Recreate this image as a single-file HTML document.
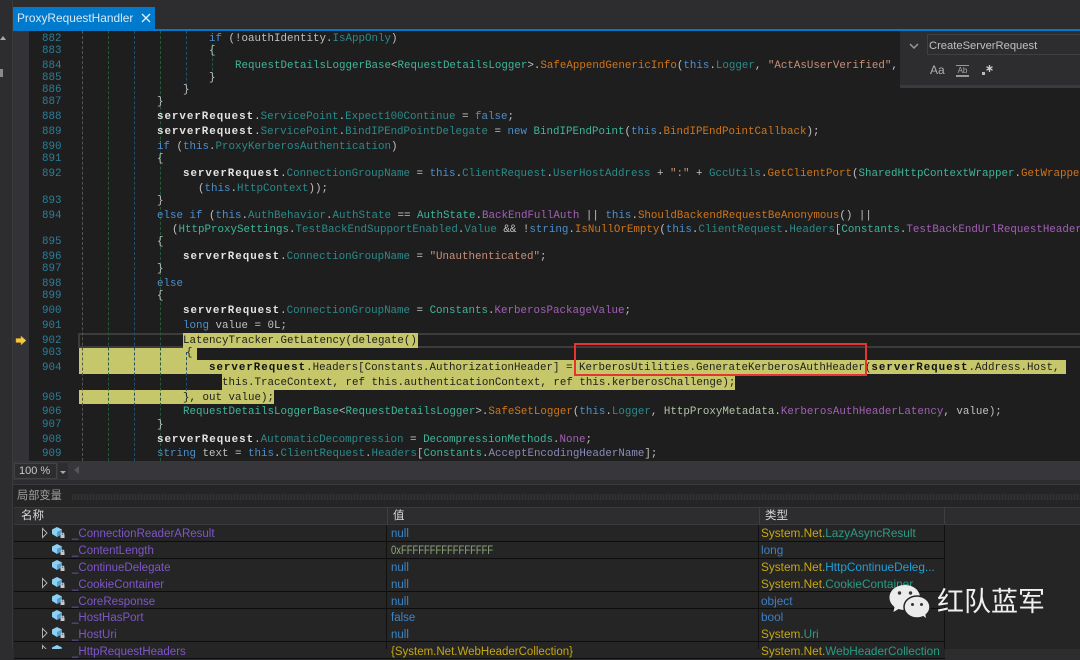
<!DOCTYPE html>
<html><head><meta charset="utf-8"><style>
html,body{margin:0;padding:0;background:#2d2d30}
body{width:1080px;height:649px;position:relative;overflow:hidden;font-family:"Liberation Sans","Noto Sans CJK SC",sans-serif;filter:blur(.3px)}
.a{position:absolute}
.l{position:absolute;margin-top:1px;font:10.83px/14px "Liberation Mono","Noto Sans CJK SC",monospace;white-space:pre;color:#c0c0c0}
.n{position:absolute;margin-top:1px;left:42px;font:10.83px/14px "Liberation Mono",monospace;color:#2b7f9b}
.k{color:#4b8fce}.t{color:#3fb59a}.p{color:#2c8a8a}.m{color:#d0751a}.v{color:#e4e4e4;font-weight:bold;letter-spacing:.97px}.s{color:#c89078}.c{color:#a45fb8}.h{color:#b0c4a8}.u{color:#8a8ab8}
.hl .k,.hl .t,.hl .p,.hl .m,.hl .c{color:#1e1e1e}.hl{color:#1e1e1e}.hl .v{color:#111}
.g{position:absolute;top:31px;height:430px;width:0;border-left:1px dashed}
.r{position:absolute;left:14px;width:931px;height:16px;background:#252526;border-bottom:1px solid #0d0d0d}
.x{position:absolute;font-size:11.5px;line-height:16px;white-space:pre}
.nm{left:72px;color:#7f55c8;margin-top:1px}.vl{left:391px;color:#3a86c8;margin-top:1px}.ty{left:761px;font-size:11.8px}
.y{color:#c8a80c}.q{color:#2a9d85}.b{color:#3f7fc4}.w{color:#1f9fd8}
.sep{position:absolute;width:1px;background:#111;top:525px;height:124px}
</style></head><body>
<svg width="0" height="0" style="position:absolute"><defs>
<g id="cube"><path d="M1 3.5L6 1l5 2.5V8l-5 3-5-3z" fill="#8fd0f0"/><path d="M6 6l5-2.5V8l-5 3z" fill="#4aa0d8"/><rect x="9.5" y="8.5" width="4" height="3.5" fill="#c8c8c8"/><path d="M10.3 8.5v-1.3h2.4v1.3" fill="none" stroke="#c8c8c8"/></g>
<path id="arr" d="M0.5 0.5L5 5 0.5 9.5z" fill="#1e1e1e" stroke="#b0b0b0"/>
</defs></svg>

<!-- left strip and tab -->
<div class="a" style="left:0;top:0;width:13px;height:649px;background:#2d2d30;border-right:1px solid #3a3a3d;box-sizing:border-box"></div>
<div class="a" style="left:0;top:69px;width:3px;height:8px;background:#8a8a8a"></div>
<div class="a" style="left:0;top:36px;border-left:3px solid transparent;border-right:3px solid transparent;border-bottom:4px solid #aaa"></div>
<div class="a" style="left:13px;top:7px;width:142px;height:22px;background:#007acc;color:#d8e8f4;font-size:11.9px;line-height:22px;padding-left:4px;box-sizing:border-box">ProxyRequestHandler</div>
<svg class="a" style="left:141px;top:13px" width="10" height="10"><path d="M1 1l8 8M9 1L1 9" stroke="#e6f2fa" stroke-width="1.3"/></svg>
<div class="a" style="left:13px;top:29px;width:1067px;height:2px;background:#007acc"></div>

<!-- editor -->
<div class="a" style="left:13px;top:31px;width:1067px;height:430px;background:#1e1e1e"></div>
<div class="a" style="left:13px;top:31px;width:16px;height:430px;background:#333337"></div>

<div class="a" style="left:78px;top:333px;width:1002px;height:15px;border:2px solid #3c3c3c;border-right:0;box-sizing:border-box"></div>
<div class="a" style="left:183px;top:333px;width:235px;height:15px;background:#c5c76a"></div>
<div class="a" style="left:79px;top:348px;width:118px;height:12px;background:#c5c76a"></div>
<div class="a" style="left:79px;top:360px;width:987px;height:14px;background:#c5c76a"></div>
<div class="a" style="left:222px;top:374px;width:513px;height:16px;background:#c5c76a"></div>
<div class="a" style="left:79px;top:390px;width:195px;height:14px;background:#c5c76a"></div>

<div class="g" style="left:82px;border-color:#555"></div>
<div class="g" style="left:108px;border-color:#245a3a"></div>
<div class="g" style="left:134px;border-color:#24506a"></div>
<div class="g" style="left:160px;border-color:#245a3a"></div>
<div class="a" style="left:186px;top:31px;height:60px;border-left:1px dashed #24506a"></div>
<div class="a" style="left:186px;top:352px;height:44px;border-left:1px dashed #24506a"></div>
<div class="a" style="left:212px;top:44px;height:36px;border-left:1px dashed #245a3a"></div>

<div class="n" style="top:31px">882</div><div class="l" style="left:209px;top:31px"><span class="k">if</span> (!oauthIdentity.<span class="p">IsAppOnly</span>)</div>
<div class="n" style="top:43px">883</div><div class="l" style="left:209px;top:43px">{</div>
<div class="n" style="top:58px">884</div><div class="l" style="left:235px;top:58px"><span class="t">RequestDetailsLoggerBase</span>&lt;<span class="t">RequestDetailsLogger</span>&gt;.<span class="m">SafeAppendGenericInfo</span>(<span class="k">this</span>.<span class="p">Logger</span>, <span class="s">"ActAsUserVerified"</span>,</div>
<div class="n" style="top:70px">885</div><div class="l" style="left:209px;top:70px">}</div>
<div class="n" style="top:82px">886</div><div class="l" style="left:183px;top:82px">}</div>
<div class="n" style="top:94px">887</div><div class="l" style="left:157px;top:94px">}</div>
<div class="n" style="top:109px">888</div><div class="l" style="left:157px;top:109px"><span class="v">serverRequest</span>.<span class="p">ServicePoint</span>.<span class="p">Expect100Continue</span> = <span class="k">false</span>;</div>
<div class="n" style="top:124px">889</div><div class="l" style="left:157px;top:124px"><span class="v">serverRequest</span>.<span class="p">ServicePoint</span>.<span class="p">BindIPEndPointDelegate</span> = <span class="k">new</span> <span class="t">BindIPEndPoint</span>(<span class="k">this</span>.<span class="m">BindIPEndPointCallback</span>);</div>
<div class="n" style="top:139px">890</div><div class="l" style="left:157px;top:139px"><span class="k">if</span> (<span class="k">this</span>.<span class="p">ProxyKerberosAuthentication</span>)</div>
<div class="n" style="top:151px">891</div><div class="l" style="left:157px;top:151px">{</div>
<div class="n" style="top:166px">892</div><div class="l" style="left:183px;top:166px"><span class="v">serverRequest</span>.<span class="p">ConnectionGroupName</span> = <span class="k">this</span>.<span class="p">ClientRequest</span>.<span class="p">UserHostAddress</span> + <span class="s">":"</span> + <span class="p">GccUtils</span>.<span class="m">GetClientPort</span>(<span class="t">SharedHttpContextWrapper</span>.<span class="m">GetWrapper</span></div>
<div class="l" style="left:198px;top:181px">(<span class="k">this</span>.<span class="p">HttpContext</span>));</div>
<div class="n" style="top:193px">893</div><div class="l" style="left:157px;top:193px">}</div>
<div class="n" style="top:208px">894</div><div class="l" style="left:157px;top:208px"><span class="k">else if</span> (<span class="k">this</span>.<span class="p">AuthBehavior</span>.<span class="p">AuthState</span> == <span class="t">AuthState</span>.<span class="c">BackEndFullAuth</span> || <span class="k">this</span>.<span class="m">ShouldBackendRequestBeAnonymous</span>() ||</div>
<div class="l" style="left:172px;top:222px">(<span class="t">HttpProxySettings</span>.<span class="p">TestBackEndSupportEnabled</span>.<span class="p">Value</span> &amp;&amp; !<span class="k">string</span>.<span class="m">IsNullOrEmpty</span>(<span class="k">this</span>.<span class="p">ClientRequest</span>.<span class="p">Headers</span>[<span class="t">Constants</span>.<span class="c">TestBackEndUrlRequestHeader</span></div>
<div class="n" style="top:234px">895</div><div class="l" style="left:157px;top:234px">{</div>
<div class="n" style="top:249px">896</div><div class="l" style="left:183px;top:249px"><span class="v">serverRequest</span>.<span class="p">ConnectionGroupName</span> = <span class="s">"Unauthenticated"</span>;</div>
<div class="n" style="top:261px">897</div><div class="l" style="left:157px;top:261px">}</div>
<div class="n" style="top:276px">898</div><div class="l" style="left:157px;top:276px"><span class="k">else</span></div>
<div class="n" style="top:288px">899</div><div class="l" style="left:157px;top:288px">{</div>
<div class="n" style="top:303px">900</div><div class="l" style="left:183px;top:303px"><span class="v">serverRequest</span>.<span class="p">ConnectionGroupName</span> = <span class="t">Constants</span>.<span class="c">KerberosPackageValue</span>;</div>
<div class="n" style="top:318px">901</div><div class="l" style="left:183px;top:318px"><span class="k">long</span> value = 0L;</div>
<div class="n" style="top:333px">902</div><div class="l hl" style="left:183px;top:333px">LatencyTracker.GetLatency(delegate()</div>
<div class="n" style="top:345px">903</div><div class="l hl" style="left:186px;top:345px">{</div>
<div class="n" style="top:360px">904</div><div class="l hl" style="left:209px;top:360px"><span class="v">serverRequest</span>.Headers[Constants.AuthorizationHeader] = KerberosUtilities.GenerateKerberosAuthHeader(<span class="v">serverRequest</span>.Address.Host,</div>
<div class="l hl" style="left:222px;top:375px">this.TraceContext, ref this.authenticationContext, ref this.kerberosChallenge);</div>
<div class="n" style="top:390px">905</div><div class="l hl" style="left:183px;top:390px">}, out value);</div>
<div class="n" style="top:404px">906</div><div class="l" style="left:183px;top:404px"><span class="t">RequestDetailsLoggerBase</span>&lt;<span class="t">RequestDetailsLogger</span>&gt;.<span class="m">SafeSetLogger</span>(<span class="k">this</span>.<span class="p">Logger</span>, <span class="h">HttpProxyMetadata</span>.<span class="c">KerberosAuthHeaderLatency</span>, value);</div>
<div class="n" style="top:417px">907</div><div class="l" style="left:157px;top:417px">}</div>
<div class="n" style="top:432px">908</div><div class="l" style="left:157px;top:432px"><span class="v">serverRequest</span>.<span class="p">AutomaticDecompression</span> = <span class="t">DecompressionMethods</span>.<span class="c">None</span>;</div>
<div class="n" style="top:446px">909</div><div class="l" style="left:157px;top:446px"><span class="k">string</span> text = <span class="k">this</span>.<span class="p">ClientRequest</span>.<span class="p">Headers</span>[<span class="t">Constants</span>.<span class="u">AcceptEncodingHeaderName</span>];</div>

<svg class="a" style="left:15px;top:335px" width="12" height="11"><path d="M1 3.5h5V1l5 4.5L6 10V7.5H1z" fill="#f5c842" stroke="#c89a20" stroke-width=".5"/></svg>

<div class="a" style="left:574px;top:343px;width:293px;height:33px;border:2px solid #e8342f;box-sizing:border-box"></div>

<!-- find widget -->
<div class="a" style="left:900px;top:31px;width:180px;height:57px;background:#2d2d30;border-bottom:3px solid #3a3a3e;box-sizing:border-box"></div>
<div class="a" style="left:927px;top:34px;width:153px;height:21px;background:#2d2d30;border:1px solid #3f3f46;border-right:0;box-sizing:border-box"></div>
<div class="a" style="left:929px;top:36px;font-size:11.2px;line-height:20px;color:#c0c0c0;white-space:pre">CreateServerRequest</div>
<svg class="a" style="left:909px;top:43px" width="10" height="7"><path d="M1 1l4 4 4-4" fill="none" stroke="#999" stroke-width="1.5"/></svg>
<div class="a" style="left:930px;top:62px;font-size:12px;line-height:16px;color:#b0b0b0;white-space:pre">Aa</div>
<div class="a" style="left:956px;top:65px;width:13px;height:9px;font-size:8px;line-height:9px;color:#aaa;border-top:1px solid #999;border-bottom:2px solid #999;text-align:center;overflow:hidden">Ab</div>
<svg class="a" style="left:981px;top:64px" width="13" height="13"><rect x="1" y="8" width="3" height="3" fill="#bbb"/><path d="M8.5 1v7M5.5 2.700l6 3.500M11.500 2.700l-6 3.500" stroke="#ccc" stroke-width="1.300"/></svg>

<!-- bar under editor -->
<div class="a" style="left:13px;top:461px;width:1067px;height:19px;background:#37373b"></div>
<div class="a" style="left:14px;top:463px;width:43px;height:16px;background:#2d2d30;border:1px solid #434346;box-sizing:border-box;color:#c8c8c8;font-size:11px;line-height:14px;padding-left:4px">100 %</div>
<div class="a" style="left:58px;top:463px;width:10px;height:16px;background:#2d2d30"></div>
<div class="a" style="left:60px;top:471px;border-left:3px solid transparent;border-right:3px solid transparent;border-top:3px solid #aaa"></div>
<div class="a" style="left:74px;top:466px;border-top:4px solid transparent;border-bottom:4px solid transparent;border-right:5px solid #56565a"></div>

<!-- locals panel -->
<div class="a" style="left:13px;top:484px;width:1067px;height:165px;background:#252526;border-top:1px solid #3a3a3e;box-sizing:border-box"></div>
<div class="a" style="left:17px;top:489px;font-size:11.2px;line-height:15px;color:#a0a0a0">局部变量</div>
<div class="a" style="left:72px;top:494px;width:1008px;height:6px;background:repeating-linear-gradient(90deg,#333336 0 1px,#2a2a2c 1px 3px)"></div>
<div class="a" style="left:14px;top:507px;width:1066px;height:18px;background:#2d2d30;border-bottom:1px solid #3a3a3e;border-top:1px solid #3a3a3e;box-sizing:border-box"></div>
<div class="a" style="left:21px;top:508px;font-size:11.5px;line-height:16px;color:#d8d8d8">名称</div>
<div class="a" style="left:393px;top:508px;font-size:11.5px;line-height:16px;color:#d8d8d8">值</div>
<div class="a" style="left:765px;top:508px;font-size:11.5px;line-height:16px;color:#d8d8d8">类型</div>
<div class="a" style="left:387px;top:507px;width:1px;height:18px;background:#3f3f42"></div>
<div class="a" style="left:759px;top:507px;width:1px;height:18px;background:#3f3f42"></div>
<div class="a" style="left:944px;top:507px;width:1px;height:18px;background:#3f3f42"></div>

<div class="r" style="top:525px"></div><div class="r" style="top:542px"></div><div class="r" style="top:559px"></div><div class="r" style="top:575px"></div><div class="r" style="top:592px"></div><div class="r" style="top:609px"></div><div class="r" style="top:625px"></div><div class="r" style="top:642px"></div>
<div class="sep" style="left:386px"></div><div class="sep" style="left:758px"></div><div class="sep" style="left:944px"></div>

<svg class="a" style="left:40px;top:526px" width="30" height="123">
<use href="#arr" x="2" y="2"/><use href="#arr" x="2" y="52"/><use href="#arr" x="2" y="102"/><use href="#arr" x="2" y="119"/>
<use href="#cube" x="11" y="0"/><use href="#cube" x="11" y="17"/><use href="#cube" x="11" y="33"/><use href="#cube" x="11" y="50"/><use href="#cube" x="11" y="67"/><use href="#cube" x="11" y="83"/><use href="#cube" x="11" y="100"/><use href="#cube" x="11" y="118"/>
</svg>

<div class="x nm" style="top:525px">_ConnectionReaderAResult</div><div class="x vl" style="top:525px">null</div><div class="x ty" style="top:525px"><span class="y">System.Net.</span><span class="q">LazyAsyncResult</span></div>
<div class="x nm" style="top:542px">_ContentLength</div><div class="x vl" style="top:542px;color:#8fa878;transform:scaleX(.82);transform-origin:0 0">0xFFFFFFFFFFFFFFFF</div><div class="x ty b" style="top:542px">long</div>
<div class="x nm" style="top:559px">_ContinueDelegate</div><div class="x vl" style="top:559px">null</div><div class="x ty" style="top:559px"><span class="y">System.Net.</span><span class="w">HttpContinueDeleg...</span></div>
<div class="x nm" style="top:576px">_CookieContainer</div><div class="x vl" style="top:576px">null</div><div class="x ty" style="top:576px"><span class="y">System.Net.</span><span class="q">CookieContainer</span></div>
<div class="x nm" style="top:593px">_CoreResponse</div><div class="x vl" style="top:593px">null</div><div class="x ty b" style="top:593px">object</div>
<div class="x nm" style="top:609px">_HostHasPort</div><div class="x vl" style="top:609px">false</div><div class="x ty b" style="top:609px">bool</div>
<div class="x nm" style="top:626px">_HostUri</div><div class="x vl" style="top:626px">null</div><div class="x ty" style="top:626px"><span class="y">System.</span><span class="q">Uri</span></div>
<div class="x nm" style="top:643px">_HttpRequestHeaders</div><div class="x vl" style="top:643px;color:#c8a80c">{System.Net.WebHeaderCollection}</div><div class="x ty" style="top:643px"><span class="y">System.Net.</span><span class="q">WebHeaderCollection</span></div>

<!-- watermark -->
<svg class="a" style="left:888px;top:583px" width="44" height="36">
<path d="M17 2C8 2 1.500 7.500 1.500 14.500c0 4 2 7 5 9.500l-1 5 5-3c2 .6 4 1 6.500 1 8.500 0 15-5.500 15-12.500S25.500 2 17 2z" fill="#ececec"/>
<ellipse cx="29" cy="24" rx="13" ry="11" fill="#ececec" stroke="#252526" stroke-width="1.500"/>
<path d="M34 32l4 3-1-5z" fill="#ececec"/>
<circle cx="11.500" cy="10" r="1.700" fill="#333"/><circle cx="22.500" cy="10" r="1.700" fill="#333"/>
<circle cx="24.500" cy="21.500" r="1.500" fill="#333"/><circle cx="33.500" cy="21.500" r="1.500" fill="#333"/>
</svg>
<div class="a" style="left:937px;top:582px;font-family:'Noto Sans CJK SC','WenQuanYi Zen Hei',sans-serif;font-size:27px;line-height:36px;color:#f0f0f0;white-space:pre">红队蓝军</div>
</body></html>
